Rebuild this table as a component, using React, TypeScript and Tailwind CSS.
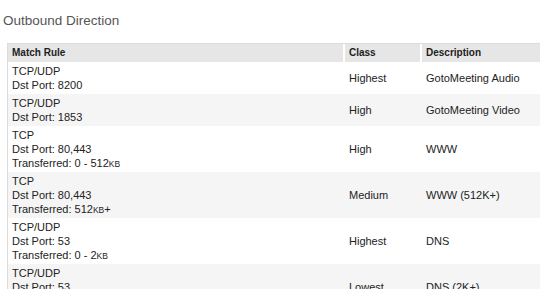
import React from "react";

type Row = { rule: React.ReactNode[]; cls: string; desc: string };

const KB = ({ plus }: { plus?: boolean }) => (
  <>
    <span className="text-[8.5px] leading-none">KB</span>
    {plus ? "+" : ""}
  </>
);

const rows: Row[] = [
  { rule: ["TCP/UDP", "Dst Port: 8200"], cls: "Highest", desc: "GotoMeeting Audio" },
  { rule: ["TCP/UDP", "Dst Port: 1853"], cls: "High", desc: "GotoMeeting Video" },
  {
    rule: ["TCP", "Dst Port: 80,443", <>Transferred: 0 - 512<KB /></>],
    cls: "High",
    desc: "WWW",
  },
  {
    rule: ["TCP", "Dst Port: 80,443", <>Transferred: 512<KB plus /></>],
    cls: "Medium",
    desc: "WWW (512K+)",
  },
  {
    rule: ["TCP/UDP", "Dst Port: 53", <>Transferred: 0 - 2<KB /></>],
    cls: "Highest",
    desc: "DNS",
  },
  {
    rule: ["TCP/UDP", "Dst Port: 53", <>Transferred: 2<KB plus /></>],
    cls: "Lowest",
    desc: "DNS (2K+)",
  },
];

export default function App() {
  return (
    <div
      className="w-[540px] h-[289px] overflow-hidden bg-white text-[#222]"
      style={{ fontFamily: '"Liberation Sans", Arial, sans-serif' }}
    >
      <div className="pl-[3px] pt-[13px] h-[43px] text-[13.5px] leading-[16px] text-[#555]">
        Outbound Direction
      </div>
      <div className="ml-[7px] w-[620px] border-l border-t border-[#dcdcdc]">
        <div className="flex h-[18px] bg-[#e6e6e6] text-[10px] font-bold leading-[18px] text-[#222]">
          <div className="w-[337px] pl-[4px] border-r-2 border-white">Match Rule</div>
          <div className="w-[77px] pl-[4px] border-r-2 border-white">Class</div>
          <div className="flex-1 pl-[4px]">Description</div>
        </div>
        {rows.map((r, i) => (
          <div
            key={i}
            className={`flex items-center py-[2px] text-[11px] leading-[14px] ${
              i % 2 === 1 ? "bg-[#f5f5f5]" : "bg-white"
            }`}
          >
            <div className="w-[339px] pl-[4px]">
              {r.rule.map((l, j) => (
                <div key={j} className="h-[14px] whitespace-nowrap">
                  {l}
                </div>
              ))}
            </div>
            <div className="w-[79px] pl-[2px]">{r.cls}</div>
            <div className="flex-1">{r.desc}</div>
          </div>
        ))}
      </div>
    </div>
  );
}
